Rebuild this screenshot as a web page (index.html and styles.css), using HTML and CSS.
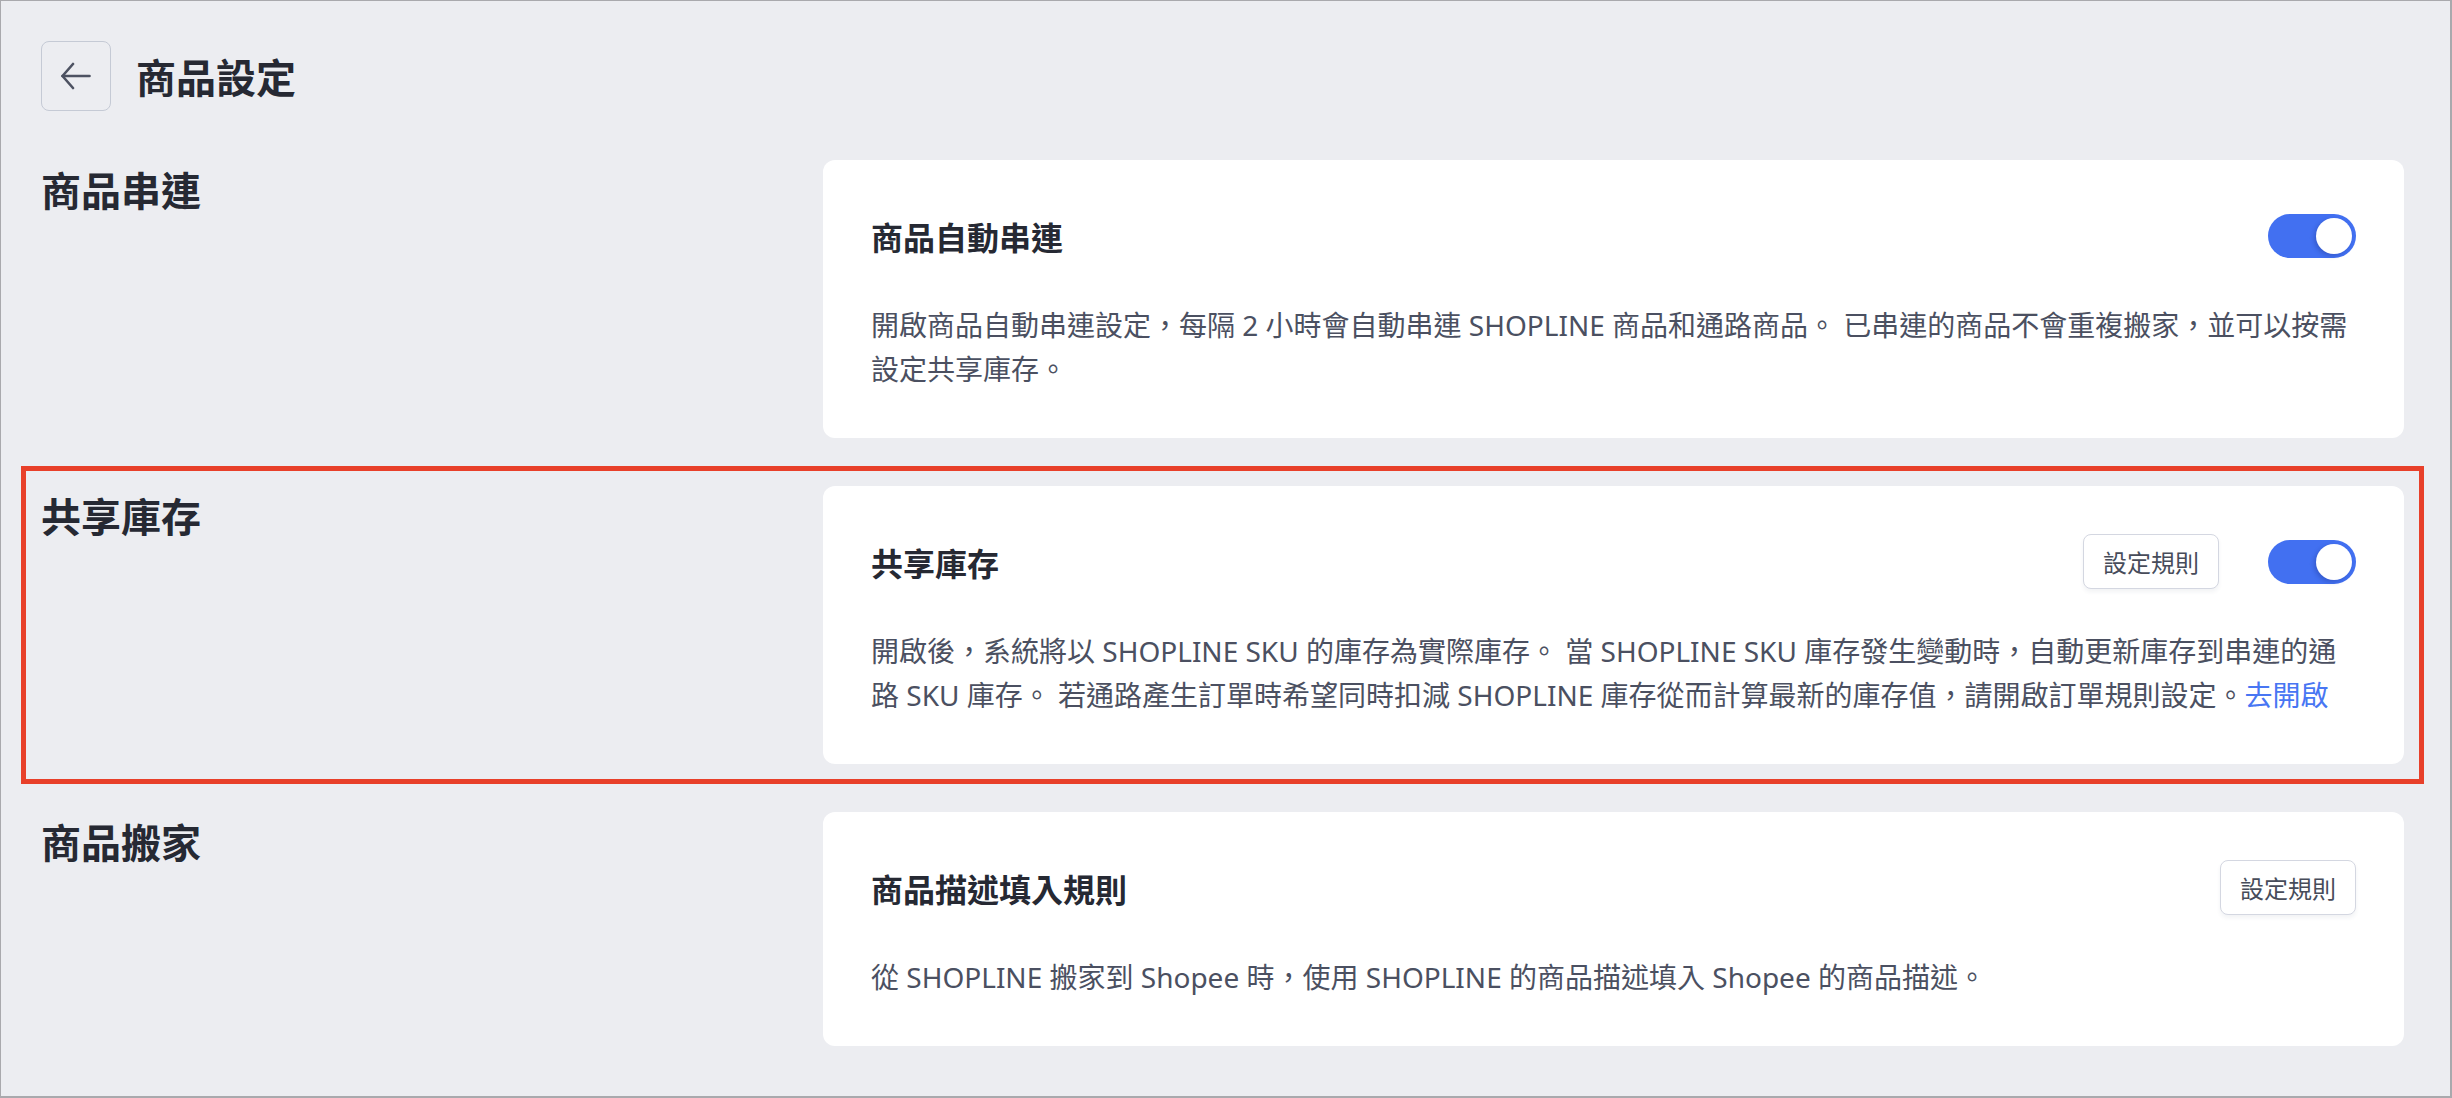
FILE: index.html
```html
<!DOCTYPE html>
<html lang="zh-Hant">
<head>
<meta charset="utf-8">
<title>商品設定</title>
<link rel="stylesheet" href="styles.css">
</head>
<body>
<div class="page">
  <header class="page-header">
    <button class="back-btn" type="button" aria-label="返回">
      <svg width="30" height="28" viewBox="0 0 30 28" fill="none" stroke="currentColor" stroke-width="2.6" stroke-linecap="round" stroke-linejoin="round">
        <path d="M12 2 L1.5 14 L12 26"/>
        <path d="M1.5 14 H28.5"/>
      </svg>
    </button>
    <h1 class="page-title">商品設定</h1>
  </header>

  <section class="setting-row">
    <h2 class="row-label">商品串連</h2>
    <div class="card">
      <div class="card-head">
        <h3 class="card-title">商品自動串連</h3>
        <div class="card-actions">
          <span class="switch is-on"><span class="switch-knob"></span></span>
        </div>
      </div>
      <p class="card-desc">開啟商品自動串連設定，每隔 2 小時會自動串連 SHOPLINE 商品和通路商品。 已串連的商品不會重複搬家，並可以按需設定共享庫存。</p>
    </div>
  </section>

  <section class="setting-row is-highlighted">
    <h2 class="row-label">共享庫存</h2>
    <div class="card">
      <div class="card-head">
        <h3 class="card-title">共享庫存</h3>
        <div class="card-actions">
          <button class="rule-btn" type="button">設定規則</button>
          <span class="switch is-on"><span class="switch-knob"></span></span>
        </div>
      </div>
      <p class="card-desc">開啟後，系統將以 SHOPLINE SKU 的庫存為實際庫存。 當 SHOPLINE SKU 庫存發生變動時，自動更新庫存到串連的通路 SKU 庫存。 若通路產生訂單時希望同時扣減 SHOPLINE 庫存從而計算最新的庫存值，請開啟訂單規則設定。<a class="link" href="#">去開啟</a></p>
    </div>
  </section>

  <section class="setting-row">
    <h2 class="row-label">商品搬家</h2>
    <div class="card">
      <div class="card-head">
        <h3 class="card-title">商品描述填入規則</h3>
        <div class="card-actions">
          <button class="rule-btn" type="button">設定規則</button>
        </div>
      </div>
      <p class="card-desc">從 SHOPLINE 搬家到 Shopee 時，使用 SHOPLINE 的商品描述填入 Shopee 的商品描述。</p>
    </div>
  </section>
</div>
</body>
</html>
```

FILE: styles.css
```css
* {
  box-sizing: border-box;
}

html, body {
  margin: 0;
  padding: 0;
}

body {
  font-family: "Noto Sans", "Noto Sans CJK TC", sans-serif;
  color: #262933;
  background: #ecedf1;
}

.page {
  min-height: 100vh;
  background: #ecedf1;
  border: 1px solid #a9a9ad;
  border-right-width: 2px;
  border-bottom-width: 2px;
  padding: 40px 46px 40px 40px;
}

/* top bar */
.page-header {
  display: flex;
  align-items: center;
  gap: 25px;
  height: 70px;
  margin-bottom: 49px;
}

.back-btn {
  width: 70px;
  height: 70px;
  display: flex;
  align-items: center;
  justify-content: center;
  padding: 0;
  background: transparent;
  border: 1.5px solid #c5cad5;
  border-radius: 8px;
  color: #4d5262;
}

.page-title {
  margin: 0;
  font-family: "Noto Sans CJK TC", sans-serif;
  font-size: 40px;
  line-height: 58px;
  font-weight: 700;
  color: #262933;
}

/* setting sections */
.setting-row {
  display: grid;
  grid-template-columns: 782px 1fr;
  align-items: start;
  margin-bottom: 48px;
}

.setting-row:last-child {
  margin-bottom: 0;
}

.setting-row.is-highlighted {
  outline: 5px solid #e8402a;
  outline-offset: 15px;
}

.row-label {
  margin: 0;
  font-family: "Noto Sans CJK TC", sans-serif;
  font-size: 40px;
  line-height: 58px;
  font-weight: 700;
  color: #262933;
}

.card {
  background: #ffffff;
  border-radius: 12px;
  padding: 48px 48px 47px;
}

.card-head {
  display: flex;
  align-items: center;
  justify-content: space-between;
  min-height: 55px;
}

.card-title {
  margin: 0;
  font-family: "Noto Sans CJK TC", sans-serif;
  font-size: 32px;
  line-height: 44px;
  font-weight: 600;
  color: #262933;
}

.card-actions {
  display: flex;
  align-items: center;
  gap: 49px;
}

.card-desc {
  margin: 40px 0 0;
  font-size: 28px;
  line-height: 44px;
  color: #4b5061;
}

.link {
  color: #4876f3;
  text-decoration: none;
}

/* outline button */
.rule-btn {
  height: 55px;
  padding: 0 19px;
  font-family: "Noto Sans CJK TC", sans-serif;
  font-size: 24px;
  color: #474c5a;
  background: #ffffff;
  border: 1.5px solid #d4d7e1;
  border-radius: 8px;
  box-shadow: 0 3px 4px rgba(40, 50, 90, 0.06);
}

/* toggle switch */
.switch {
  width: 88px;
  height: 44px;
  border-radius: 22px;
  background: #d4d7e1;
  display: flex;
  align-items: center;
  padding: 0 4px;
}

.switch.is-on {
  background: #4270f1;
  justify-content: flex-end;
}

.switch-knob {
  width: 36px;
  height: 36px;
  border-radius: 50%;
  background: #ffffff;
  box-shadow: -2px 2px 4px rgba(20, 40, 120, 0.28);
}
```
